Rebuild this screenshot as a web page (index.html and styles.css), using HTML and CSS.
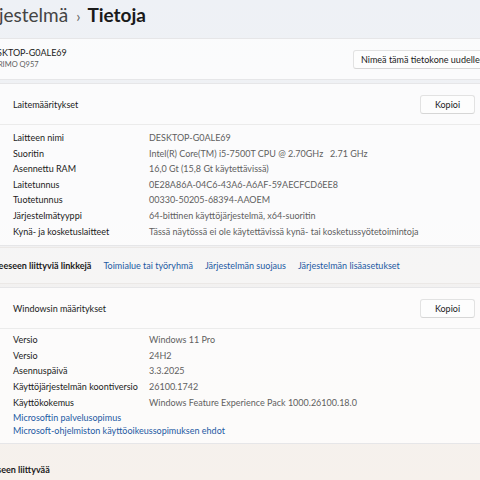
FILE: index.html
```html
<!DOCTYPE html>
<html lang="fi">

<head>
    <meta charset="utf-8">
    <title>Tietoja</title>
    <link rel="stylesheet" href="styles.css">
</head>

<body>
    <div class="page">
        <header class="crumbs">
            <span class="crumb-parent">Järjestelmä</span>
            <span class="crumb-sep">›</span>
            <span class="crumb-current">Tietoja</span>
        </header>

        <section class="card device-card">
            <div class="device-info">
                <div class="device-name">DESKTOP-G0ALE69</div>
                <div class="device-model">ESPRIMO Q957</div>
            </div>
            <button class="btn">Nimeä tämä tietokone uudelleen</button>
        </section>

        <section class="card spec-card">
            <div class="spec-head">
                <span>Laitemääritykset</span>
                <button class="btn btn-copy">Kopioi</button>
            </div>
            <dl class="spec-list">
                <dt>Laitteen nimi</dt>
                <dd>DESKTOP-G0ALE69</dd>
                <dt>Suoritin</dt>
                <dd>Intel(R) Core(TM) i5-7500T CPU @ 2.70GHz&nbsp;&nbsp; 2.71 GHz</dd>
                <dt>Asennettu RAM</dt>
                <dd>16,0 Gt (15,8 Gt käytettävissä)</dd>
                <dt>Laitetunnus</dt>
                <dd>0E28A86A-04C6-43A6-A6AF-59AECFCD6EE8</dd>
                <dt>Tuotetunnus</dt>
                <dd>00330-50205-68394-AAOEM</dd>
                <dt>Järjestelmätyyppi</dt>
                <dd>64-bittinen käyttöjärjestelmä, x64-suoritin</dd>
                <dt>Kynä- ja kosketuslaitteet</dt>
                <dd>Tässä näytössä ei ole käytettävissä kynä- tai kosketussyötetoimintoja</dd>
            </dl>
        </section>

        <nav class="related-links">
            <span class="related-label">Aiheeseen liittyviä linkkejä</span>
            <a href="#">Toimialue tai työryhmä</a>
            <a href="#">Järjestelmän suojaus</a>
            <a href="#">Järjestelmän lisäasetukset</a>
        </nav>

        <section class="card spec-card windows-card">
            <div class="spec-head">
                <span>Windowsin määritykset</span>
                <button class="btn btn-copy">Kopioi</button>
            </div>
            <dl class="spec-list">
                <dt>Versio</dt>
                <dd>Windows 11 Pro</dd>
                <dt>Versio</dt>
                <dd>24H2</dd>
                <dt>Asennuspäivä</dt>
                <dd>3.3.2025</dd>
                <dt>Käyttöjärjestelmän koontiversio</dt>
                <dd>26100.1742</dd>
                <dt>Käyttökokemus</dt>
                <dd>Windows Feature Experience Pack 1000.26100.18.0</dd>
            </dl>
            <div class="spec-links">
                <a href="#">Microsoftin palvelusopimus</a>
                <a href="#">Microsoft-ohjelmiston käyttöoikeussopimuksen ehdot</a>
            </div>
        </section>

        <h2 class="related-title">Aiheeseen liittyvää</h2>
    </div>
</body>

</html>
```

FILE: styles.css
```css
html,
body {
    margin: 0;
    height: 100%;
}

body {
    overflow: hidden;
    font-family: Lato, "Noto Sans", sans-serif;
    font-size: 9px;
    color: #1b1b1b;
    background: linear-gradient(180deg, #eef1f6 0%, #f1f1f2 45%, #f6f1ec 100%);
}

/* window content is scrolled a bit to the right, so the left edge is cut */
.page {
    margin-left: -30px;
    width: 521px;
}

.crumbs {
    display: flex;
    align-items: baseline;
    height: 36px;
    margin-bottom: 2px;
    margin-left: 5px;
    font-size: 19px;
    line-height: 29px;
    white-space: nowrap;
}

.crumb-parent {
    color: #444;
}

.crumb-sep {
    margin: 0 7px 0 8px;
    font-size: 15px;
    color: #606060;
}

.crumb-current {
    font-weight: 700;
    color: #1a1a1a;
}

.card {
    background: rgba(255, 255, 255, 0.72);
    border: 1px solid #e6e6e8;
    border-radius: 4px;
}

.btn {
    height: 19px;
    padding: 0 7px;
    border: 1px solid #e2e2e2;
    border-bottom-color: #d6d6d6;
    border-radius: 3px;
    background: #fdfdfd;
    font-family: inherit;
    font-size: 9px;
    color: #1b1b1b;
    white-space: nowrap;
}

.device-card {
    display: flex;
    align-items: center;
    height: 40px;
    padding-left: 14px;
}

.device-info {
    flex: 0 0 368px;
}

.device-name {
    font-size: 9px;
    line-height: 12px;
}

.device-model {
    font-size: 7.5px;
    line-height: 12px;
    color: #5e5e5e;
}

.device-card .btn {
    flex-shrink: 0;
    padding: 0 10px 0 7px;
}

.spec-card {
    margin-top: 3px;
}

.spec-head {
    display: flex;
    align-items: center;
    justify-content: space-between;
    height: 40px;
    padding: 0 15px 0 42px;
    border-bottom: 1px solid #ebebeb;
}

.btn-copy {
    width: 55px;
}

.spec-list {
    display: grid;
    grid-template-columns: 136px 1fr;
    margin: 0;
    padding: 5px 0 6px 42px;
    line-height: 15.6px;
}

.spec-list dt,
.spec-list dd {
    margin: 0;
    white-space: nowrap;
}

.spec-list dd {
    color: #5f5f5f;
}

.windows-card .spec-list {
    padding: 3px 0 0 42px;
}

.spec-links {
    display: flex;
    flex-direction: column;
    padding: 1px 0 5px 42px;
    line-height: 13.3px;
}

a {
    color: #1d5aa3;
    text-decoration: none;
}

.related-links {
    display: flex;
    align-items: center;
    gap: 12px;
    height: 35px;
    margin-top: 1px;
    padding-left: 14px;
    white-space: nowrap;
    background: rgba(255, 255, 255, 0.3);
    border: 1px solid #ebe8e6;
    border-radius: 4px;
}

.related-label {
    font-weight: 700;
}

.related-title {
    margin: 20px 0 0 4px;
    font-size: 9px;
    font-weight: 700;
}
```
